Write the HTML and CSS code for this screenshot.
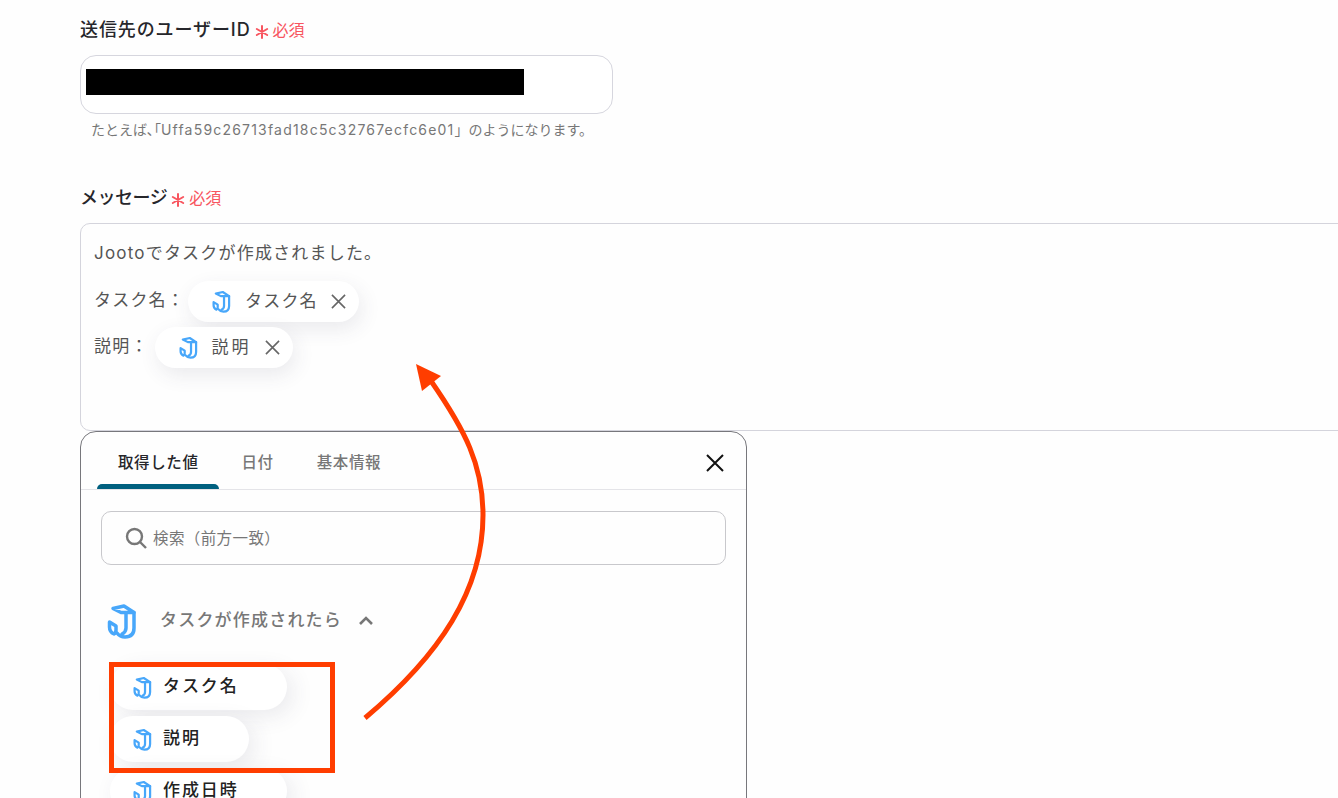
FILE: index.html
```html
<!DOCTYPE html>
<html lang="ja">
<head>
<meta charset="utf-8">
<title>フォーム</title>
<link rel="stylesheet" href="styles.css">
</head>
<body>
<svg class="defs" width="0" height="0" aria-hidden="true">
  <symbol id="jooto" viewBox="0 0 30 36">
    <g fill="none" stroke="#48a7fa" stroke-linejoin="round" stroke-linecap="round">
      <path d="M6 5.5 L17 3 L27 9.5 H14 Z"/>
      <path d="M27 9.5 V25 Q27 34 18 34 Q13 34 10 30"/>
      <path d="M19 10 V25 Q19 29 15 31"/>
      <path d="M2.5 19 L9 23 V27 Q9 30 7 31 Q2.5 29 2.5 24 Z"/>
    </g>
  </symbol>
  <symbol id="star" viewBox="0 0 14 14">
    <path fill="none" stroke="#f8555f" stroke-width="2" stroke-linecap="round" d="M7 1V13M1.8 4 12.2 10M12.2 4 1.8 10"/>
  </symbol>
</svg>
<main class="page">
  <section class="field">
    <div class="label">送信先のユーザーID <span class="req"><svg class="star"><use href="#star"/></svg>必須</span></div>
    <div class="input"><div class="redact"></div></div>
    <p class="help">たとえば､｢<span class="help-code">Uffa59c26713fad18c5c32767ecfc6e01</span>」のようになります。</p>
  </section>
  <section class="field field-msg">
    <div class="label label-tight">メッセージ <span class="req"><svg class="star"><use href="#star"/></svg>必須</span></div>
    <div class="textarea">
      <div class="line">Jootoでタスクが作成されました。</div>
      <div class="line line-chip"><span class="row-label">タスク名：</span>
        <span class="chip"><svg class="ico-chip"><use href="#jooto"/></svg><span class="chip-text">タスク名</span>
          <svg class="x" viewBox="0 0 16 16"><path d="M1 1 15 15M15 1 1 15"/></svg></span>
      </div>
      <div class="line line-chip line-chip2"><span class="row-label">説明：</span>
        <span class="chip"><svg class="ico-chip"><use href="#jooto"/></svg><span class="chip-text chip-text-wide">説明</span>
          <svg class="x" viewBox="0 0 16 16"><path d="M1 1 15 15M15 1 1 15"/></svg></span>
      </div>
    </div>
  </section>
  <section class="popup">
    <div class="tabs">
      <div class="tab active">取得した値</div>
      <div class="tab">日付</div>
      <div class="tab">基本情報</div>
      <svg class="close" viewBox="0 0 18 18"><path d="M1 1 17 17M17 1 1 17"/></svg>
    </div>
    <div class="search">
      <svg class="lens" viewBox="0 0 22 22"><circle cx="9.5" cy="9.5" r="7.5"/><path d="M15 15 21 21"/></svg>
      <span class="search-text">検索（前方一致）</span>
    </div>
    <div class="group">
      <svg class="ico-big"><use href="#jooto"/></svg>
      <span class="group-title">タスクが作成されたら</span>
      <svg class="chev" viewBox="0 0 16 10"><path d="M2 8 8 2 14 8"/></svg>
    </div>
    <ul class="items">
      <li class="item"><svg class="ico-item"><use href="#jooto"/></svg><span class="item-text">タスク名</span></li>
      <li class="item"><svg class="ico-item"><use href="#jooto"/></svg><span class="item-text">説明</span></li>
      <li class="item"><svg class="ico-item"><use href="#jooto"/></svg><span class="item-text">作成日時</span></li>
    </ul>
  </section>
</main>
<div class="mark"></div>
<svg class="arrow" viewBox="0 0 1338 798">
  <path class="arrow-line" d="M365 718 C440 655 483 590 483 515 C483 465 465 430 431 381"/>
  <path class="arrow-head" d="M416 364 L441 376 L422 391 Z"/>
</svg>
</body>
</html>
```
FILE: styles.css
```css
html, body { margin: 0; height: 798px; overflow: hidden; }
body {
  position: relative;
  background: #fefefe;
  font-family: Inter, "Noto Sans CJK JP", "Noto Sans", sans-serif;
  color: #222;
}
.defs { position: absolute; }
.page { padding: 17px 0 0 80px; }
.field { width: 533px; }
.field-msg { width: auto; margin-top: 46px; }
.label { font-size: 18px; font-weight: 500; line-height: 26px; letter-spacing: 0.9px; color: #26262b; display: flex; align-items: center; gap: 4px; }
.label-tight { letter-spacing: -0.5px; }
.req { color: #f8555f; font-size: 16px; font-weight: 400; display: inline-flex; align-items: center; letter-spacing: 0; }
.star { width: 14px; height: 14px; margin: 4px 4px 0 0; }
.input {
  box-sizing: border-box;
  height: 59px;
  margin-top: 12px;
  border: 1px solid #d6d6de;
  border-radius: 16px;
  padding: 13px 0 0 5px;
  background: #fff;
}
.redact { width: 438px; height: 26px; background: #000; }
.help { margin: 7px 0 0 11px; font-size: 14px; line-height: 18px; letter-spacing: 0; color: #777; }
.help-code { letter-spacing: 1.2px; }
.textarea {
  box-sizing: border-box;
  height: 208px;
  margin-top: 12px;
  margin-right: -20px;
  border: 1px solid #d4d4dc;
  border-radius: 10px 0 0 10px;
  padding: 15px 0 0 13px;
  background: #fefefe;
  font-size: 17px;
  letter-spacing: 1.2px;
  color: #555;
}
.line { line-height: 28px; height: 28px; }
.line-chip { display: flex; align-items: center; margin-top: 20px; }
.line-chip2 { margin-top: 18px; }
.row-label { padding-bottom: 3px; }
.chip {
  display: inline-flex;
  align-items: center;
  height: 41px;
  padding: 0 13px 0 24px;
  margin-left: 3px;
  border-radius: 21px;
  background: #fff;
  box-shadow: 3px 7px 20px rgba(60, 60, 90, 0.1);
}
.line-chip2 .chip { margin-left: 6px; }
.chip-text-wide { letter-spacing: 3px; }
.ico-chip { width: 19px; height: 23px; margin-right: 14px; stroke-width: 3.5; }
.x { width: 15px; height: 15px; margin-left: 13px; fill: none; stroke: #666; stroke-width: 1.7; }
.popup {
  box-sizing: border-box;
  width: 667px;
  height: 420px;
  border: 1px solid #77777c;
  border-radius: 16px;
  background: #fefefe;
}
.tabs {
  display: flex;
  align-items: flex-start;
  height: 58px;
  box-sizing: border-box;
  padding-left: 16px;
  border-bottom: 1px solid #e4e4e8;
  font-size: 15.5px;
  font-weight: 500;
  letter-spacing: 0.6px;
  color: #777;
}
.tab { position: relative; padding: 0 21px; line-height: 62px; }
.tab + .tab { margin-left: 1px; }
.tab.active { color: #26262b; height: 57px; }
.tab.active::after {
  content: "";
  position: absolute;
  left: 0;
  right: 1px;
  bottom: 0;
  height: 5px;
  border-radius: 5px 5px 0 0;
  background: #00607f;
}
.close { width: 18px; height: 18px; margin: 22px 22px 0 auto; fill: none; stroke: #111; stroke-width: 2; }
.search {
  box-sizing: border-box;
  display: flex;
  align-items: center;
  width: 625px;
  height: 54px;
  margin: 21px 0 0 20px;
  padding-left: 23px;
  border: 1px solid #c8c8cc;
  border-radius: 10px;
  font-size: 15.5px;
  letter-spacing: 0.4px;
  color: #777;
}
.search-text { padding-bottom: 2px; }
.lens { width: 22px; height: 22px; margin-right: 6px; fill: none; stroke: #777; stroke-width: 2.4; }
.group { display: flex; align-items: center; height: 36px; margin: 38px 0 0 26px; }
.ico-big { width: 30px; height: 36px; margin-right: 23px; stroke-width: 3.5; }
.group-title { font-size: 17px; font-weight: 500; letter-spacing: 1.2px; color: #777; padding-bottom: 5px; }
.chev { width: 16px; height: 10px; margin-left: 16px; fill: none; stroke: #777; stroke-width: 2.6; }
.items { list-style: none; margin: 25px 0 0 29px; padding: 0; }
.item {
  display: flex;
  align-items: center;
  width: fit-content;
  height: 46px;
  margin-bottom: 6px;
  padding: 0 48px 0 23px;
  border-radius: 24px;
  background: #fff;
  font-size: 17px;
  font-weight: 500;
  letter-spacing: 1.9px;
  color: #222;
  box-shadow: 6px 6px 22px rgba(60, 60, 90, 0.1);
}
.item-text { padding-bottom: 5px; }
.ico-item { width: 19px; height: 23px; margin-right: 11px; stroke-width: 3.5; }
.mark {
  position: absolute;
  left: 109px;
  top: 662px;
  box-sizing: border-box;
  width: 226px;
  height: 111px;
  border: 5px solid #ff3d00;
}
.arrow { position: absolute; left: 0; top: 0; width: 1338px; height: 798px; pointer-events: none; }
.arrow-line { fill: none; stroke: #ff3d00; stroke-width: 5; }
.arrow-head { fill: #ff3d00; }
```
